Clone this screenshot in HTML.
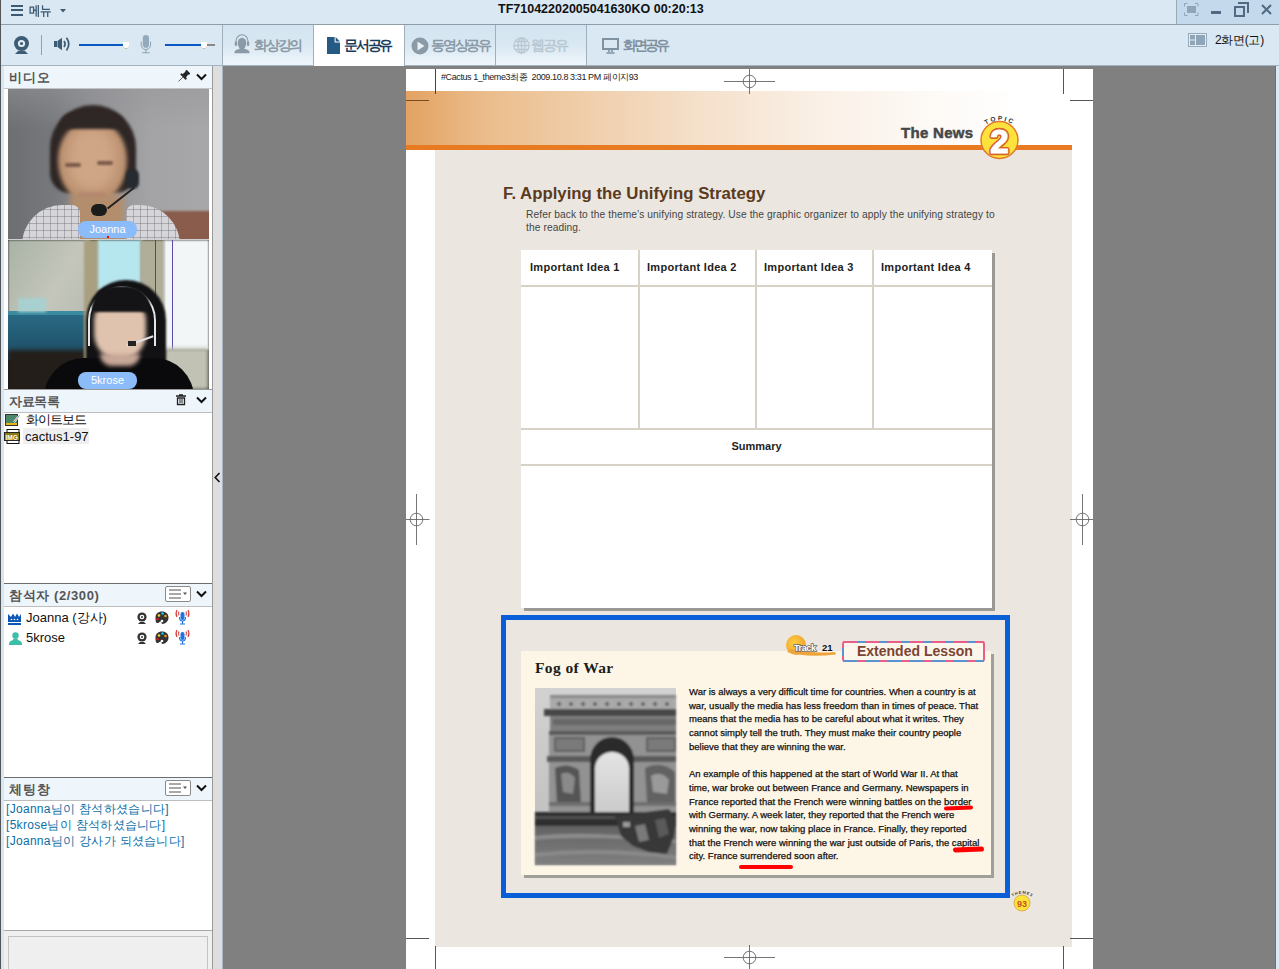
<!DOCTYPE html>
<html><head><meta charset="utf-8">
<style>
*{margin:0;padding:0;box-sizing:border-box}
html,body{width:1279px;height:969px;overflow:hidden;background:#808080;font-family:"Liberation Sans",sans-serif}
.a{position:absolute}
svg{position:absolute;overflow:visible}
.tab{top:25px;height:40px;background:linear-gradient(#d3e4f0,#d9e8f3 50%,#eef6fb);border-left:1px solid #9fb0bc}
.tabt{position:absolute;font-size:14px;font-weight:bold;color:#8a9aa6;top:37px;letter-spacing:-2.2px;white-space:nowrap;line-height:16px}
.hdr{position:absolute;left:4px;width:208px;height:23px;background:#eef5fb;border-bottom:1px solid #bdbdbd}
.hdrt{position:absolute;left:5px;top:5px;font-size:13px;font-weight:bold;color:#555;letter-spacing:1px;white-space:nowrap;line-height:14px}
.li{position:absolute;font-size:12px;color:#111;white-space:nowrap;line-height:14px}
.chat{position:absolute;left:6px;font-size:12px;color:#0b6fa8;white-space:nowrap;line-height:14px;letter-spacing:0.3px}
</style></head><body>
<!-- ============ TITLE BAR ============ -->
<div class="a" style="left:0;top:0;width:1279px;height:25px;background:#d9e8f3;border-bottom:1px solid #8e9ea9"></div>
<div class="a" style="left:0;top:0;width:1px;height:969px;background:#555"></div>
<div class="a" style="left:11px;top:5px;width:12px;height:2px;background:#3d5a73"></div>
<div class="a" style="left:11px;top:9px;width:12px;height:2px;background:#3d5a73"></div>
<div class="a" style="left:11px;top:14px;width:12px;height:2px;background:#3d5a73"></div>
<div class="a" style="left:29px;top:3px;font-size:13px;font-weight:bold;color:#3f5b73;line-height:15px;letter-spacing:-0.5px;transform:scaleX(0.88);transform-origin:0 0">메뉴</div>
<svg style="left:60px;top:9px" width="6" height="4"><path d="M0 0H6L3 3.5Z" fill="#3d5a73"/></svg>
<div class="a" style="left:498px;top:3px;font-size:12.5px;font-weight:bold;color:#111;line-height:13px;white-space:nowrap">TF71042202005041630KO 00:20:13</div>
<div class="a" style="left:1176px;top:0;width:103px;height:24px;background:#c5d9ec;border-left:1px solid #9aaab5"></div>
<!-- window controls -->
<svg style="left:1184px;top:3px" width="15" height="13"><path d="M0.5 3.5V0.5H3.5M11 0.5H14V3.5M14 9.5V12.5H11M3.5 12.5H0.5V9.5" stroke="#8fa5b8" fill="none"/><rect x="3" y="3" width="9" height="7" fill="#8fa5b8"/></svg>
<div class="a" style="left:1211px;top:11px;width:10px;height:3px;background:#4f6a82"></div>
<svg style="left:1234px;top:2px" width="15" height="15"><path d="M1 5H10V14H1Z" stroke="#4f6a82" stroke-width="2" fill="none"/><path d="M4 1H14V11" stroke="#4f6a82" stroke-width="2" fill="none"/></svg>
<svg style="left:1261px;top:4px" width="11" height="11"><path d="M1 1L10 10M10 1L1 10" stroke="#4f6a82" stroke-width="2"/></svg>
<!-- ============ TOOLBAR ============ -->
<div class="a" style="left:1px;top:25px;width:1278px;height:41px;background:#d9e8f3;border-bottom:1px solid #a3b4c0"></div>
<!-- webcam -->
<svg style="left:14px;top:36px" width="16" height="19"><circle cx="7.5" cy="7.5" r="7.5" fill="#3f5c75"/><circle cx="7.5" cy="7.5" r="3.6" fill="#e6eef5"/><circle cx="7.5" cy="7.5" r="1.6" fill="#3f5c75"/><path d="M4 15H11L14 18H1Z" fill="#3f5c75"/></svg>
<div class="a" style="left:41px;top:35px;width:1px;height:20px;background:#8ea2b2"></div>
<!-- speaker -->
<svg style="left:54px;top:37px" width="17" height="15"><path d="M0 4H3V10H0Z M3.5 4L8 0.8V13.2L3.5 10Z" fill="#3f5c75"/><path d="M10 4Q12.2 7 10 10" stroke="#3f5c75" stroke-width="1.7" fill="none"/><path d="M12.5 0.8Q17 7 12.5 13.5" stroke="#3f5c75" stroke-width="1.7" fill="none"/></svg>
<div class="a" style="left:79px;top:44px;width:45px;height:2px;background:#0a57c0"></div>
<svg style="left:123px;top:42px" width="7" height="8"><path d="M0 0H6V4A3 3.2 0 0 1 0 4Z" fill="#fff"/><path d="M0.3 5Q3 8.5 5.7 5" stroke="#b0a8a0" stroke-width="0.8" fill="none"/></svg>
<div class="a" style="left:129px;top:44px;width:0px;height:3px;background:#888"></div>
<!-- mic -->
<svg style="left:140px;top:35px" width="12" height="19"><rect x="2.8" y="0" width="6.2" height="12.8" rx="3.1" fill="#94a9ba"/><path d="M1.2 6.5V9Q1.2 14.5 5.9 14.5Q10.6 14.5 10.6 9V6.5" stroke="#8da2b3" stroke-width="1" fill="none"/><path d="M5.9 14.5V17.5M2 17.7H9.8" stroke="#8da2b3" stroke-width="1.1"/></svg>
<div class="a" style="left:165px;top:44px;width:37px;height:2px;background:#0a57c0"></div>
<svg style="left:201px;top:42px" width="7" height="8"><path d="M0 0H6V4A3 3.2 0 0 1 0 4Z" fill="#fff"/><path d="M0.3 5Q3 8.5 5.7 5" stroke="#b0a8a0" stroke-width="0.8" fill="none"/></svg>
<div class="a" style="left:207px;top:44px;width:8px;height:2px;background:#888"></div>
<!-- tabs -->
<div class="a tab" style="left:222px;width:91px"></div>
<div class="a" style="left:313px;top:25px;width:91px;height:41px;background:#fff;border-left:1px solid #9fb0bc"></div>
<div class="a tab" style="left:404px;width:91px"></div>
<div class="a tab" style="left:495px;width:91px"></div>
<div class="a" style="left:586px;top:25px;width:1px;height:40px;background:#9fb0bc"></div>
<!-- tab icons -->
<svg style="left:233px;top:34px" width="18" height="20"><path d="M3 9.5V7A6 6.2 0 0 1 15 7V9.5" stroke="#8a9aa6" stroke-width="1.1" fill="none"/><ellipse cx="9" cy="9.3" rx="4.3" ry="5.6" fill="#8a9aa6"/><rect x="1.8" y="7.5" width="2.2" height="4.5" rx="1.1" fill="#8a9aa6"/><rect x="14" y="7.5" width="2.2" height="4.5" rx="1.1" fill="#8a9aa6"/><path d="M6.8 13.5H11.2L11.6 15Q16.5 15.6 16.5 18.4V19.2H1.5V18.4Q1.5 15.6 6.4 15Z" fill="#8a9aa6"/></svg>
<div class="tabt" style="left:254px">화상강의</div>
<svg style="left:327px;top:37px" width="14" height="18"><path d="M0 0H7.6V5.6H13V17H0Z" fill="#245a84"/><path d="M8.6 0L13 4.5H8.6Z" fill="#245a84"/></svg>
<div class="tabt" style="left:344px;color:#1b3d5c">문서공유</div>
<svg style="left:411px;top:37px" width="18" height="18"><circle cx="9" cy="9" r="8.5" fill="#8a9aa6"/><path d="M6.5 4.5L13.5 9L6.5 13.5Z" fill="#e9f1f7"/></svg>
<div class="tabt" style="left:431px">동영상공유</div>
<svg style="left:513px;top:37px" width="17" height="17"><g stroke="#b9c8d2" stroke-width="1.3" fill="none"><circle cx="8.5" cy="8.5" r="7.6"/><ellipse cx="8.5" cy="8.5" rx="3.5" ry="7.6"/><path d="M1 8.5H16M2.2 4.5H14.8M2.2 12.5H14.8M8.5 1V16"/></g></svg>
<div class="tabt" style="left:531px;color:#b9c8d2">웹공유</div>
<svg style="left:602px;top:38px" width="17" height="16"><rect x="1" y="1" width="15" height="10" stroke="#7f92a1" stroke-width="2" fill="none"/><path d="M7 12V14M10 12V14M4.5 15H12.5" stroke="#7f92a1" stroke-width="1.6"/></svg>
<div class="tabt" style="left:623px;color:#8090a0;letter-spacing:-2.9px">화면공유</div>
<!-- layout -->
<svg style="left:1188px;top:33px" width="19" height="14"><rect x="0.5" y="0.5" width="18" height="13" fill="#e4edf4" stroke="#96abbb"/><rect x="2" y="2" width="5" height="4.5" fill="#8fa5b8"/><rect x="2" y="7.5" width="5" height="4.5" fill="#8fa5b8"/><rect x="8" y="2" width="9" height="10" fill="#8fa5b8"/></svg>
<div class="a" style="left:1215px;top:33px;font-size:12px;color:#111;line-height:14px;white-space:nowrap;letter-spacing:-0.3px">2화면(고)</div>


<!-- ============ DOCUMENT ============ -->
<div class="a" style="left:406px;top:69px;width:687px;height:900px;background:#fff"></div>
<div class="a" style="left:406px;top:91px;width:666px;height:54px;background:linear-gradient(90deg,#e3a262 0%,#ebbd8c 12%,#f0cfac 28%,#f5e1cc 45%,#faf0e6 62%,#fdf9f5 78%,#fff 92%)"></div>
<div class="a" style="left:406px;top:145px;width:666px;height:5px;background:#e87a22"></div>
<div class="a" style="left:435px;top:150px;width:637px;height:797px;background:#ebe7e0"></div>
<div class="a" style="left:441px;top:72px;font-size:9px;color:#222;white-space:nowrap;line-height:10px;letter-spacing:-0.4px">#Cactus 1_theme3최종&nbsp; 2009.10.8 3:31 PM 페이지93</div>
<!-- crop marks -->
<div class="a" style="left:435px;top:69px;width:1px;height:25px;background:#444"></div>
<div class="a" style="left:406px;top:100px;width:23px;height:1px;background:#7a4a20"></div>
<div class="a" style="left:1063px;top:69px;width:1px;height:25px;background:#555"></div>
<div class="a" style="left:1070px;top:100px;width:23px;height:1px;background:#555"></div>
<div class="a" style="left:406px;top:938px;width:23px;height:1px;background:#555"></div>
<div class="a" style="left:1070px;top:938px;width:23px;height:1px;background:#555"></div>
<div class="a" style="left:435px;top:946px;width:1px;height:23px;background:#555"></div>
<div class="a" style="left:1063px;top:946px;width:1px;height:23px;background:#555"></div>
<svg style="left:724px;top:69px" width="52" height="26"><path d="M0 12.5H51M25.5 0V25" stroke="#666" stroke-width="0.9"/><circle cx="25.5" cy="12.5" r="6.3" stroke="#666" stroke-width="0.9" fill="none"/></svg>
<svg style="left:724px;top:945px" width="52" height="26"><path d="M0 12.5H51M25.5 0V25" stroke="#666" stroke-width="0.9"/><circle cx="25.5" cy="12.5" r="6.3" stroke="#666" stroke-width="0.9" fill="none"/></svg>
<svg style="left:406px;top:494px" width="26" height="52"><path d="M0 25.5H23.5M10.5 0V51" stroke="#666" stroke-width="0.9"/><circle cx="10.5" cy="25.5" r="6.3" stroke="#666" stroke-width="0.9" fill="none"/></svg>
<svg style="left:1068px;top:494px" width="26" height="52"><path d="M2 25.5H25M14.5 0V51" stroke="#666" stroke-width="0.9"/><circle cx="14.5" cy="25.5" r="6.3" stroke="#666" stroke-width="0.9" fill="none"/></svg>
<!-- The News -->
<div class="a" style="left:901px;top:124px;font-size:15px;font-weight:bold;color:#474747;white-space:nowrap;line-height:17px;letter-spacing:0.3px;-webkit-text-stroke:0.5px #474747">The News</div>
<svg style="left:975px;top:112px" width="50" height="50">
  <circle cx="24.5" cy="28" r="18.5" fill="#fde23c" stroke="#e0782a" stroke-width="1.5"/>
  <text x="24.5" y="41" text-anchor="middle" font-family="Liberation Sans" font-weight="bold" font-size="33" fill="#fff" stroke="#d5662a" stroke-width="4.5" stroke-linejoin="round">2</text>
  <text x="24.5" y="41" text-anchor="middle" font-family="Liberation Sans" font-weight="bold" font-size="33" fill="#fff" stroke="#fff" stroke-width="1.2">2</text>
  <path id="arc" d="M9 14Q24.5 3 40 14" fill="none"/>
  <text font-family="Liberation Sans" font-weight="bold" font-size="6.5" fill="#333" letter-spacing="2"><textPath href="#arc" startOffset="6%">TOPIC</textPath></text>
</svg>
<!-- section title -->
<div class="a" style="left:503px;top:184px;font-size:16.8px;font-weight:bold;color:#5b3a1e;white-space:nowrap;line-height:19px">F. Applying the Unifying Strategy</div>
<div class="a" style="left:526px;top:208px;width:480px;font-size:10.2px;color:#444;line-height:13px;letter-spacing:0.1px">Refer back to the theme’s unifying strategy. Use the graphic organizer to apply the unifying strategy to the reading.</div>
<!-- table -->
<div class="a" style="left:524px;top:253px;width:471px;height:358px;background:#9a9894"></div>
<div class="a" style="left:521px;top:250px;width:471px;height:358px;background:#fff"></div>
<div class="a" style="left:521px;top:285px;width:471px;height:2px;background:#d8d2c6"></div>
<div class="a" style="left:521px;top:428px;width:471px;height:2px;background:#d8d2c6"></div>
<div class="a" style="left:521px;top:464px;width:471px;height:2px;background:#d8d2c6"></div>
<div class="a" style="left:638px;top:250px;width:2px;height:179px;background:#d8d2c6"></div>
<div class="a" style="left:755px;top:250px;width:2px;height:179px;background:#d8d2c6"></div>
<div class="a" style="left:872px;top:250px;width:2px;height:179px;background:#d8d2c6"></div>
<div class="a" style="left:530px;top:260px;font-size:11px;font-weight:bold;color:#1e1e1e;white-space:nowrap;line-height:13px;letter-spacing:0.3px;margin-top:1px">Important Idea 1</div>
<div class="a" style="left:647px;top:260px;font-size:11px;font-weight:bold;color:#1e1e1e;white-space:nowrap;line-height:13px;letter-spacing:0.3px;margin-top:1px">Important Idea 2</div>
<div class="a" style="left:764px;top:260px;font-size:11px;font-weight:bold;color:#1e1e1e;white-space:nowrap;line-height:13px;letter-spacing:0.3px;margin-top:1px">Important Idea 3</div>
<div class="a" style="left:881px;top:260px;font-size:11px;font-weight:bold;color:#1e1e1e;white-space:nowrap;line-height:13px;letter-spacing:0.3px;margin-top:1px">Important Idea 4</div>
<div class="a" style="left:521px;top:440px;width:471px;text-align:center;font-size:11px;font-weight:bold;color:#1e1e1e;line-height:13px">Summary</div>
<!-- blue frame -->
<div class="a" style="left:501px;top:615px;width:509px;height:283px;border:5px solid #0a5fd8"></div>
<div class="a" style="left:524px;top:654px;width:470px;height:224px;background:#a19f9a"></div>
<div class="a" style="left:521px;top:651px;width:470px;height:224px;background:#fdf6e6"></div>

<!-- track + extended lesson -->
<svg style="left:784px;top:634px" width="56" height="26">
  <defs><radialGradient id="tg" cx="0.4" cy="0.4" r="0.7"><stop offset="0" stop-color="#fbd040"/><stop offset="1" stop-color="#f29a2a"/></radialGradient></defs>
  <circle cx="12" cy="11" r="10" fill="url(#tg)"/>
  <path d="M3 18Q22 24 52 20.5L51 18Q30 20 7 15Z" fill="#eea43a"/>
  <text x="10" y="17" font-family="Liberation Sans" font-weight="bold" font-size="9" fill="#fff" stroke="#6a6a6a" stroke-width="1.6" paint-order="stroke" letter-spacing="-0.4">Track</text>
  <text x="38" y="17" font-family="Liberation Sans" font-weight="bold" font-size="9.5" fill="#111">21</text>
</svg>
<div class="a" style="left:842px;top:641px;width:143px;height:21px;border-radius:3px;background:#fdf6ea;border:2px solid #e8608a;border-bottom-color:#5a94d0"></div>
<div class="a" style="left:843px;top:641px;width:141px;height:2px;background:repeating-linear-gradient(90deg,#e8608a 0 14px,#5a94d0 14px 22px)"></div>
<div class="a" style="left:843px;top:660px;width:141px;height:2px;background:repeating-linear-gradient(90deg,#5a94d0 0 14px,#e8608a 14px 22px)"></div>
<div class="a" style="left:842px;top:648px;width:2px;height:8px;background:#5a94d0"></div>
<div class="a" style="left:857px;top:643px;font-size:14px;font-weight:bold;color:#7b4434;white-space:nowrap;line-height:16px;letter-spacing:0px">Extended Lesson</div>
<div class="a" style="left:535px;top:659px;font-family:'Liberation Serif',serif;font-size:15.5px;font-weight:bold;color:#1c1c1c;white-space:nowrap;line-height:17px;letter-spacing:0.4px">Fog of War</div>
<!-- photo -->
<svg style="left:535px;top:688px" width="141" height="177" viewBox="0 0 141 177">
  <defs><filter id="bl"><feGaussianBlur stdDeviation="0.9"/></filter>
  <linearGradient id="sky" x1="0" y1="0" x2="0" y2="1"><stop offset="0" stop-color="#d2d2d2"/><stop offset="1" stop-color="#bcbcbc"/></linearGradient>
  <linearGradient id="op" x1="0" y1="0" x2="0" y2="1"><stop offset="0" stop-color="#e4e4e4"/><stop offset="1" stop-color="#cacaca"/></linearGradient>
  <linearGradient id="rd" x1="0" y1="0" x2="0" y2="1"><stop offset="0" stop-color="#626262"/><stop offset="1" stop-color="#808080"/></linearGradient></defs>
  <rect width="141" height="177" fill="url(#sky)"/>
  <g filter="url(#bl)">
  <rect x="15" y="7" width="126" height="4" fill="#8a8a8a"/>
  <rect x="15" y="10" width="126" height="12" fill="#a9a9a9"/>
  <g fill="#5e5e5e"><circle cx="24" cy="16" r="2"/><circle cx="36" cy="16" r="2"/><circle cx="48" cy="16" r="2"/><circle cx="60" cy="16" r="2"/><circle cx="72" cy="16" r="2"/><circle cx="84" cy="16" r="2"/><circle cx="96" cy="16" r="2"/><circle cx="108" cy="16" r="2"/><circle cx="120" cy="16" r="2"/><circle cx="132" cy="16" r="2"/></g>
  <rect x="9" y="21" width="132" height="7" fill="#474747"/>
  <rect x="15" y="28" width="126" height="16" fill="#7e7e7e"/>
  <rect x="18" y="31" width="123" height="6" fill="#686868"/>
  <rect x="14" y="43" width="127" height="4" fill="#5a5a5a"/>
  <rect x="14" y="47" width="127" height="79" fill="#929292"/>
  <rect x="19" y="49" width="31" height="15" fill="#5e5e5e"/>
  <rect x="21" y="51" width="27" height="11" fill="#7a7a7a"/>
  <rect x="111" y="49" width="30" height="15" fill="#5e5e5e"/>
  <rect x="113" y="51" width="26" height="11" fill="#7a7a7a"/>
  <rect x="12" y="68" width="46" height="6" fill="#5a5a5a"/>
  <rect x="98" y="68" width="43" height="6" fill="#5a5a5a"/>
  <path d="M20 80Q32 74 44 82L46 114L22 116Z" fill="#555"/>
  <path d="M26 86Q34 82 40 90L38 106L28 104Z" fill="#8a8a8a"/>
  <path d="M110 80Q126 72 140 84L140 114L112 114Z" fill="#626262"/>
  <path d="M116 88Q126 82 134 92L132 106L118 104Z" fill="#9a9a9a"/>
  <rect x="14" y="114" width="127" height="4" fill="#6e6e6e"/>
  <path d="M55 126V72A22 23 0 0 1 99 72V126Z" fill="#2c2c2c"/>
  <path d="M60 126V80A17 16 0 0 1 94 80V126Z" fill="url(#op)"/>
  <rect x="0" y="124" width="141" height="14" fill="#2e2e2e"/>
  <path d="M0 129H141V131H0Z" fill="#444"/>
  <rect x="0" y="138" width="141" height="39" fill="url(#rd)"/>
  <path d="M0 148Q50 142 141 152V155Q60 147 0 152Z" fill="#8c8c8c"/>
  <path d="M0 165Q70 158 141 168V171Q60 162 0 169Z" fill="#8a8a8a"/>
  <path d="M80 128L134 121L141 132L139 148L132 166L114 164L98 158L86 148Z" fill="#383838"/>
  <path d="M100 138L110 136L114 152L104 154Z" fill="#7a7a7a"/>
  <path d="M120 132L130 130L134 146L124 150Z" fill="#5a5a5a"/>
  <rect x="88" y="134" width="7" height="5" fill="#9a9a9a"/>
  <path d="M0 128H80V131H0Z" fill="#505050"/>
  </g>
</svg>
<!-- body text -->
<div class="a" id="body" style="left:689px;top:685px;width:300px;font-size:9.52px;color:#111;-webkit-text-stroke:0.25px #111;line-height:13.7px;white-space:nowrap">
War is always a very difficult time for countries. When a country is at<br>
war, usually the media has less freedom than in times of peace. That<br>
means that the media has to be careful about what it writes. They<br>
cannot simply tell the truth. They must make their country people<br>
believe that they are winning the war.<br>
<div style="height:13.7px"></div>
An example of this happened at the start of World War II. At that<br>
time, war broke out between France and Germany. Newspapers in<br>
France reported that the French were winning battles on the border<br>
with Germany. A week later, they reported that the French were<br>
winning the war, now taking place in France. Finally, they reported<br>
that the French were winning the war just outside of Paris, the capital<br>
city. France surrendered soon after.
</div>
<div class="a" style="left:944px;top:806px;width:29px;height:4px;border-radius:2px;background:#f00;transform:rotate(-2deg)"></div>
<div class="a" style="left:953px;top:847px;width:31px;height:5px;border-radius:3px;background:#f00;transform:rotate(-2deg)"></div>
<div class="a" style="left:739px;top:865px;width:54px;height:4px;border-radius:2px;background:#f00"></div>
<!-- page badge -->
<svg style="left:1008px;top:886px" width="28" height="26">
  <circle cx="14" cy="17" r="8" fill="#fde23c" stroke="#d9a040" stroke-width="0.8"/>
  <text x="14" y="20.5" text-anchor="middle" font-family="Liberation Sans" font-weight="bold" font-size="9" fill="#c8551a">93</text>
  <path id="arc2" d="M3.5 11.5Q14 4 24.5 11.5" fill="none"/>
  <text font-family="Liberation Sans" font-weight="bold" font-size="4" fill="#333" letter-spacing="0.8"><textPath href="#arc2" startOffset="5%">THEME3</textPath></text>
</svg>
<!-- ============ LEFT PANEL ============ -->
<div class="a" style="left:1px;top:66px;width:3px;height:903px;background:#d5e6f4"></div>
<div class="a" style="left:4px;top:66px;width:208px;height:903px;background:#fff"></div>
<div class="a" style="left:212px;top:66px;width:1px;height:903px;background:#9a9a9a"></div>
<div class="a" style="left:213px;top:66px;width:9px;height:903px;background:#dedede"></div>
<div class="a" style="left:222px;top:66px;width:1px;height:903px;background:#a7b6c2"></div>
<svg style="left:214px;top:472px" width="7" height="11"><path d="M5.5 1L1.2 5.5L5.5 10" stroke="#111" stroke-width="1.6" fill="none"/></svg>

<!-- videos -->
<div class="hdr" style="top:66px;border-bottom-color:#c4c4c4"><div class="hdrt">비디오</div></div>
<svg style="left:177px;top:70px" width="13" height="13"><g transform="rotate(45 6.5 6.5)"><rect x="3.8" y="-0.5" width="5.4" height="2.2" rx="0.8" fill="#222"/><path d="M4.6 1.5H8.4L8.9 5.6H4.1Z" fill="#222"/><rect x="2.6" y="5.4" width="7.8" height="2" rx="0.6" fill="#222"/><path d="M6.5 7.4V13.5" stroke="#444" stroke-width="0.8"/></g></svg>
<svg style="left:196px;top:73px" width="11" height="8"><path d="M1 1.5L5.5 6L10 1.5" stroke="#111" stroke-width="2" fill="none"/></svg>
<div class="a" id="v1" style="left:8px;top:89px;width:201px;height:150px;overflow:hidden;background:linear-gradient(90deg,#6c6e72 0%,#76787c 22%,#909194 45%,#a3a3a5 70%,#a7a7a9 100%)">
  <div class="a" style="left:0;top:0;width:201px;height:40px;background:linear-gradient(rgba(150,150,154,0.5),rgba(140,142,146,0))"></div>
  <div class="a" style="left:150px;top:122px;width:60px;height:32px;background:#8a5c4c;filter:blur(1px)"></div>
  <div class="a" style="left:42px;top:16px;width:86px;height:88px;border-radius:43px 43px 20px 20px;background:#2f2725;filter:blur(1.5px)"></div>
  <div class="a" style="left:50px;top:31px;width:69px;height:84px;border-radius:34px 34px 34px 34px/40px 40px 44px 44px;background:#bb9170;filter:blur(2px)"></div>
  <div class="a" style="left:60px;top:38px;width:48px;height:64px;background:#cfa686;border-radius:24px;filter:blur(6px)"></div>
  <div class="a" style="left:52px;top:24px;width:64px;height:16px;border-radius:32px 32px 10px 10px;background:#2f2725;filter:blur(1.5px)"></div>
  <div class="a" style="left:57px;top:74px;width:16px;height:4px;border-radius:2px;background:#7a5a48;filter:blur(1.2px)"></div>
  <div class="a" style="left:89px;top:72px;width:16px;height:4px;border-radius:2px;background:#7a5a48;filter:blur(1.2px)"></div>
  <div class="a" style="left:70px;top:104px;width:28px;height:7px;background:#b08070;border-radius:4px;filter:blur(1.5px)"></div>
  <div class="a" style="left:62px;top:106px;width:54px;height:50px;background:#b48e6c;filter:blur(3px)"></div>
  <div class="a" style="left:14px;top:116px;width:58px;height:40px;border-radius:40px 8px 0 0;background:repeating-linear-gradient(90deg,rgba(90,90,100,0.35) 0 1px,transparent 1px 7px),repeating-linear-gradient(0deg,rgba(90,90,100,0.35) 0 1px,transparent 1px 7px),#d6d5d9"></div>
  <div class="a" style="left:118px;top:116px;width:54px;height:40px;border-radius:8px 40px 0 0;background:repeating-linear-gradient(90deg,rgba(90,90,100,0.35) 0 1px,transparent 1px 7px),repeating-linear-gradient(0deg,rgba(90,90,100,0.35) 0 1px,transparent 1px 7px),#d6d5d9"></div>
  <div class="a" style="left:83px;top:115px;width:16px;height:12px;border-radius:7px;background:#1c1c1c"></div>
  <div class="a" style="left:96px;top:108px;width:34px;height:2px;background:#222;transform:rotate(-38deg)"></div>
  <div class="a" style="left:118px;top:80px;width:13px;height:20px;border-radius:6px;background:#262b31;filter:blur(1px)"></div>
</div>
<div class="a" style="left:78px;top:221px;width:59px;height:17px;border-radius:8px;background:#8bbcf9"></div>
<div class="a" style="left:78px;top:222px;width:59px;text-align:center;font-size:11px;color:#fff;line-height:14px">Joanna</div>
<div class="a" style="left:107px;top:236px;width:2px;height:2px;background:#f00"></div>
<div class="a" style="left:8px;top:239px;width:201px;height:1px;background:#d0d0d0"></div>
<div class="a" id="v2" style="left:8px;top:240px;width:201px;height:149px;overflow:hidden;background:#1a1c1c">
  <div class="a" style="left:0;top:0;width:82px;height:76px;background:linear-gradient(120deg,#a9b2a6,#c4c6bb 60%,#b8bcb0);filter:blur(1px)"></div>
  <div class="a" style="left:0;top:74px;width:82px;height:46px;background:linear-gradient(#2a6a84,#1c4a62)"></div>
  <div class="a" style="left:0;top:71px;width:80px;height:4px;background:#3a8aa0"></div>
  <div class="a" style="left:10px;top:58px;width:28px;height:14px;background:#a8d0d0;filter:blur(1.5px)"></div>
  <div class="a" style="left:0px;top:110px;width:82px;height:40px;background:#241e1a;filter:blur(2px)"></div>
  <div class="a" style="left:76px;top:0;width:16px;height:120px;background:#a8a080;filter:blur(1px)"></div>
  <div class="a" style="left:90px;top:0;width:44px;height:50px;background:#b6e6ee;filter:blur(1px)"></div>
  <div class="a" style="left:132px;top:0;width:25px;height:118px;background:#b0ae98;filter:blur(1px)"></div>
  <div class="a" style="left:156px;top:0;width:45px;height:110px;background:#f2f6f6;filter:blur(1px)"></div>
  <div class="a" style="left:147px;top:0;width:1px;height:110px;background:#5040a0"></div>
  <div class="a" style="left:164px;top:0;width:1px;height:110px;background:#5a4ca8"></div>
  <div class="a" style="left:156px;top:108px;width:45px;height:42px;background:#c2c2b4;filter:blur(2px)"></div>
  <div class="a" style="left:78px;top:40px;width:80px;height:120px;border-radius:40px 40px 20px 20px;background:#121214;filter:blur(1px)"></div>
  <div class="a" style="left:80px;top:46px;width:68px;height:60px;border-radius:34px 34px 0 0;border:2px solid #e4e6e8;border-bottom:none;filter:blur(0.4px)"></div>
  <div class="a" style="left:86px;top:62px;width:52px;height:58px;border-radius:18px 18px 26px 26px;background:#e0c3ae;filter:blur(2px)"></div>
  <div class="a" style="left:84px;top:46px;width:58px;height:26px;border-radius:28px 28px 6px 6px;background:#141416;filter:blur(1px)"></div>
  <div class="a" style="left:36px;top:118px;width:150px;height:40px;border-radius:50px 50px 0 0;background:#0a0a0c"></div>
  <div class="a" style="left:92px;top:114px;width:40px;height:12px;border-radius:0 0 20px 20px;background:#c8a898;filter:blur(2px)"></div>
  <div class="a" style="left:118px;top:100px;width:28px;height:2px;background:#e0e0e0;transform:rotate(-20deg)"></div>
  <div class="a" style="left:120px;top:101px;width:8px;height:5px;background:#222"></div>
</div>
<div class="a" style="left:78px;top:372px;width:59px;height:17px;border-radius:8px;background:#8bbcf9"></div>
<div class="a" style="left:78px;top:373px;width:59px;text-align:center;font-size:11px;color:#fff;line-height:14px">5krose</div>
<div class="a" style="left:4px;top:389px;width:208px;height:1px;background:#9a9a9a"></div>
<!-- 자료목록 -->
<div class="hdr" style="top:390px"><div class="hdrt" style="letter-spacing:-0.3px">자료목록</div></div>
<svg style="left:176px;top:395px" width="11" height="10"><path d="M0 1H10M3 0H7M1.5 3H8.5V9.5H1.5Z" stroke="#222" stroke-width="1.3" fill="none"/><path d="M4 4V8M6 4V8" stroke="#222" stroke-width="1"/></svg>
<svg style="left:196px;top:396px" width="11" height="8"><path d="M1 1.5L5.5 6L10 1.5" stroke="#111" stroke-width="2" fill="none"/></svg>
<svg style="left:5px;top:414px" width="16" height="13"><rect x="0" y="0" width="13" height="12" fill="#333"/><rect x="1" y="1" width="11" height="8" fill="#4b8768"/><rect x="1" y="9" width="11" height="2" fill="#e8b519"/><path d="M9 8L14.5 1.5" stroke="#fff" stroke-width="2"/><path d="M9 8L14.5 1.5" stroke="#333" stroke-width="0.6"/></svg>
<div class="li" style="left:26px;top:413px;font-size:13px;letter-spacing:-1px">화이트보드</div>
<div class="a" style="left:23px;top:428px;width:66px;height:16px;background:#efefef"></div>
<svg style="left:4px;top:429px" width="17" height="15"><rect x="3" y="0.5" width="12" height="14" fill="#fff" stroke="#111"/><rect x="0" y="3" width="16" height="9" fill="#262626"/><rect x="1" y="4" width="14" height="7" fill="#8a7a10"/><text x="1.5" y="10.5" font-size="6.5" font-weight="bold" fill="#fff" font-family="Liberation Sans">IMG</text></svg>
<div class="li" style="left:25px;top:430px;font-size:13px">cactus1-97</div>
<!-- 참석자 -->
<div class="a" style="left:4px;top:583px;width:208px;height:1px;background:#6d6d6d"></div>
<div class="hdr" style="top:584px"><div class="hdrt" style="letter-spacing:0.6px">참석자 (2/300)</div></div>
<svg style="left:165px;top:586px" width="26" height="16"><rect x="0.5" y="0.5" width="25" height="15" rx="1.5" fill="#fff" stroke="#8a8a8a"/><path d="M4 4H16M4 8H16M4 12H16" stroke="#8c8c8c" stroke-width="1.3"/><path d="M18 6.5H22L20 9Z" fill="#555"/></svg>
<svg style="left:196px;top:590px" width="11" height="8"><path d="M1 1.5L5.5 6L10 1.5" stroke="#111" stroke-width="2" fill="none"/></svg>
<svg style="left:8px;top:613px" width="14" height="12"><path d="M0 1L3 4L5 0.5L7 4L9 0.5L11 4L13 1V9H0Z" fill="#0b57b3"/><rect x="0" y="10" width="13" height="2" fill="#0b57b3"/><circle cx="3.5" cy="6.5" r="0.8" fill="#fff"/><circle cx="6.5" cy="6.5" r="0.8" fill="#fff"/><circle cx="9.5" cy="6.5" r="0.8" fill="#fff"/></svg>
<div class="li" style="left:26px;top:611px;font-size:13px">Joanna (강사)</div>
<svg style="left:9px;top:632px" width="13" height="13"><circle cx="6.5" cy="3.5" r="3.2" fill="#3bbfa9"/><path d="M4.5 6.5H8.5L9 8Q13 9 13 12V13H0V12Q0 9 4 8Z" fill="#3bbfa9"/></svg>
<div class="li" style="left:26px;top:631px;font-size:13px">5krose</div>
<!-- participant icons -->
<svg style="left:137px;top:612px" width="11" height="13" id="ic1"><circle cx="5" cy="5" r="4.6" fill="#333"/><circle cx="5" cy="5" r="2.3" fill="#fff"/><circle cx="5" cy="5" r="1" fill="#333"/><path d="M3 10H7L9 12H1Z" fill="#333"/></svg>
<svg style="left:155px;top:611px" width="14" height="14"><path d="M7 0.5C11 0.5 13.5 3 13.5 6.5C13.5 10 11 13 7 13C6.5 13 6.8 11 6 10.5C5 10 3.5 12.5 2 12C0.5 11.5 0.5 8 0.5 6.5C0.5 3 3 0.5 7 0.5Z" fill="#333"/><circle cx="4" cy="4.5" r="1.3" fill="#f5d327"/><circle cx="7.5" cy="2.5" r="1.2" fill="#19c8f0"/><circle cx="10.5" cy="5" r="1.3" fill="#f59a16"/><circle cx="2.5" cy="8" r="1.3" fill="#e01010"/><circle cx="7" cy="10" r="1.3" fill="#fff"/></svg>
<svg style="left:175px;top:609px" width="15" height="16"><path d="M2 1Q0 4.5 2 8M4 2.5Q3 4.5 4 6.5M13 1Q15 4.5 13 8M11 2.5Q12 4.5 11 6.5" stroke="#d43a3a" stroke-width="1.1" fill="none"/><rect x="5.5" y="3" width="4" height="8" rx="2" fill="#1f74e0"/><path d="M4.5 8Q4.5 12 7.5 12Q10.5 12 10.5 8M7.5 12V14.5M5 15H10" stroke="#1f74e0" stroke-width="1.1" fill="none"/></svg>
<svg style="left:137px;top:632px" width="11" height="13"><circle cx="5" cy="5" r="4.6" fill="#333"/><circle cx="5" cy="5" r="2.3" fill="#fff"/><circle cx="5" cy="5" r="1" fill="#333"/><path d="M3 10H7L9 12H1Z" fill="#333"/></svg>
<svg style="left:155px;top:631px" width="14" height="14"><path d="M7 0.5C11 0.5 13.5 3 13.5 6.5C13.5 10 11 13 7 13C6.5 13 6.8 11 6 10.5C5 10 3.5 12.5 2 12C0.5 11.5 0.5 8 0.5 6.5C0.5 3 3 0.5 7 0.5Z" fill="#333"/><circle cx="4" cy="4.5" r="1.3" fill="#f5d327"/><circle cx="7.5" cy="2.5" r="1.2" fill="#19c8f0"/><circle cx="10.5" cy="5" r="1.3" fill="#f59a16"/><circle cx="2.5" cy="8" r="1.3" fill="#e01010"/><circle cx="7" cy="10" r="1.3" fill="#fff"/></svg>
<svg style="left:175px;top:629px" width="15" height="16"><path d="M2 1Q0 4.5 2 8M4 2.5Q3 4.5 4 6.5M13 1Q15 4.5 13 8M11 2.5Q12 4.5 11 6.5" stroke="#d43a3a" stroke-width="1.1" fill="none"/><rect x="5.5" y="3" width="4" height="8" rx="2" fill="#1f74e0"/><path d="M4.5 8Q4.5 12 7.5 12Q10.5 12 10.5 8M7.5 12V14.5M5 15H10" stroke="#1f74e0" stroke-width="1.1" fill="none"/></svg>
<!-- 체팅창 -->
<div class="a" style="left:4px;top:777px;width:208px;height:1px;background:#6d6d6d"></div>
<div class="hdr" style="top:778px"><div class="hdrt">체팅창</div></div>
<svg style="left:165px;top:780px" width="26" height="16"><rect x="0.5" y="0.5" width="25" height="15" rx="1.5" fill="#fff" stroke="#8a8a8a"/><path d="M4 4H16M4 8H16M4 12H16" stroke="#8c8c8c" stroke-width="1.3"/><path d="M18 6.5H22L20 9Z" fill="#555"/></svg>
<svg style="left:196px;top:784px" width="11" height="8"><path d="M1 1.5L5.5 6L10 1.5" stroke="#111" stroke-width="2" fill="none"/></svg>
<div class="chat" style="top:802px">[Joanna님이 참석하셨습니다]</div>
<div class="chat" style="top:818px">[5krose님이 참석하셨습니다]</div>
<div class="chat" style="top:834px">[Joanna님이 강사가 되셨습니다]</div>
<div class="a" style="left:4px;top:930px;width:208px;height:1px;background:#a8a8a8"></div>
<div class="a" style="left:4px;top:931px;width:208px;height:38px;background:#f0f0f0"></div>
<div class="a" style="left:8px;top:936px;width:200px;height:40px;border:1px solid #c3c3c3;background:#efefef"></div>
<div class="a" style="left:1275px;top:66px;width:1px;height:903px;background:#6e6e6e"></div><div class="a" style="left:1276px;top:66px;width:3px;height:903px;background:#d9e8f3"></div>
</body></html>
